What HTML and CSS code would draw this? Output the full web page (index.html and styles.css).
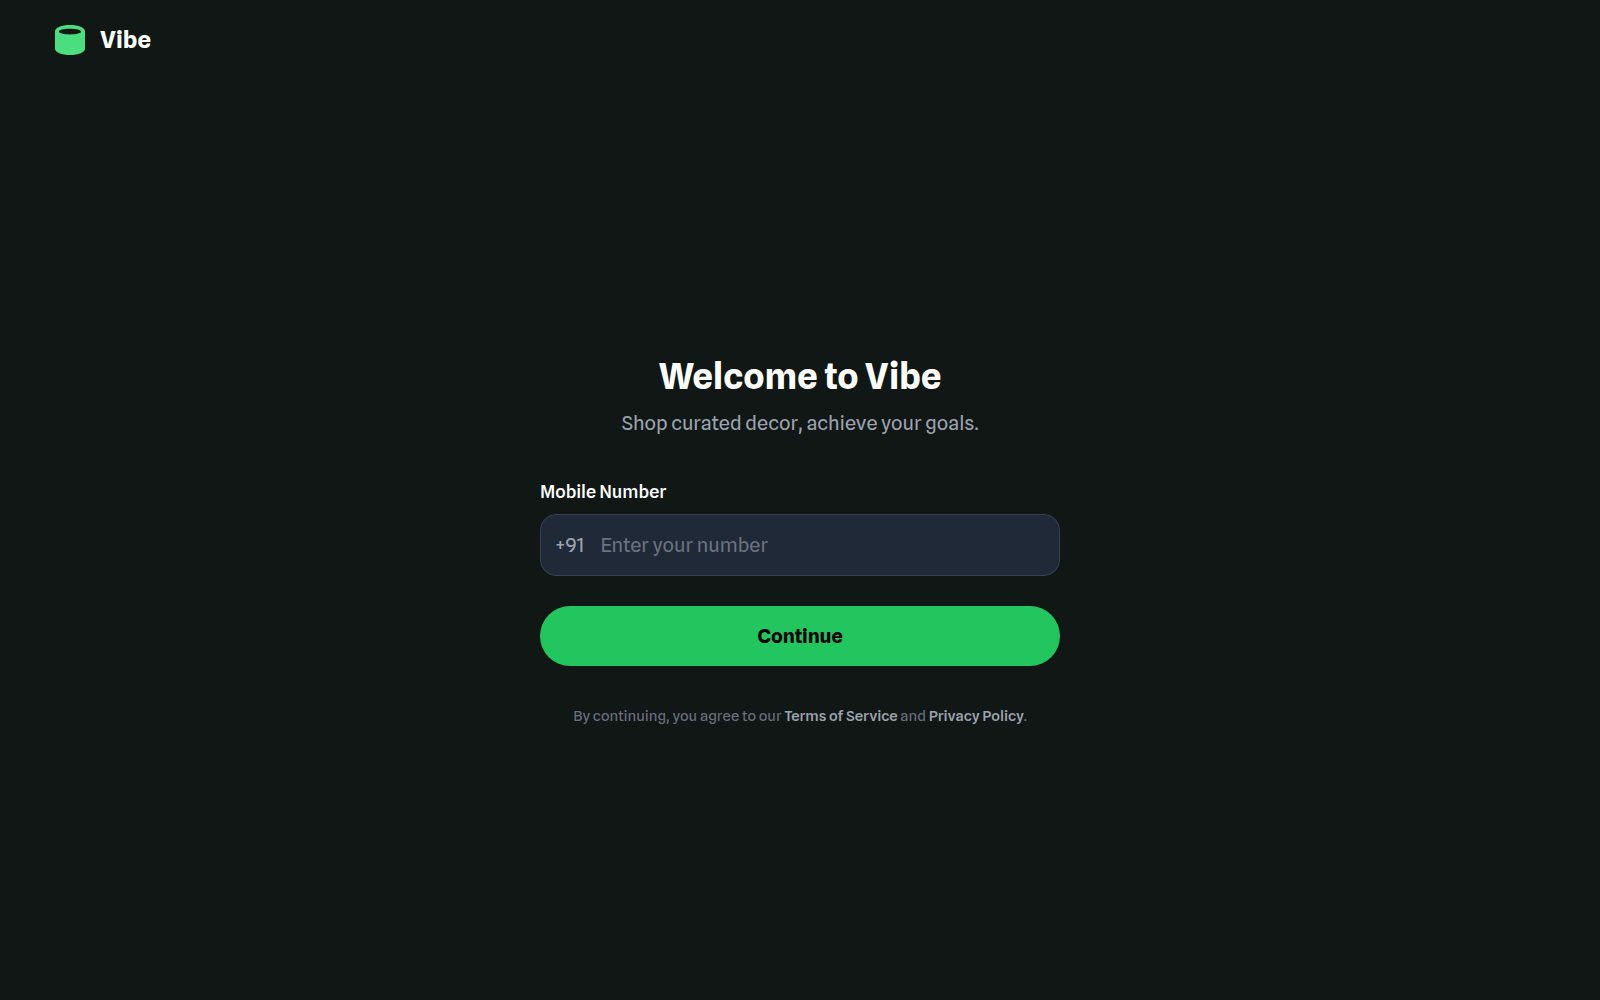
FILE: index.html
```html
<!DOCTYPE html>
<html lang="en">
<head>
<meta charset="utf-8">
<meta name="viewport" content="width=device-width, initial-scale=1">
<title>Vibe</title>
<link rel="stylesheet" href="styles.css">
</head>
<body>
<header class="header">
  <svg class="logo" viewBox="0 0 30 30" aria-hidden="true">
    <path fill="#4ade80" fill-rule="evenodd" d="M15 0C6.500 0 0 2.600 0 6.500V23.500C0 27.400 6.500 30 15 30S30 27.400 30 23.500V6.500C30 2.600 23.500 0 15 0ZM15 3.700C21.500 3.700 26.200 5 26.200 6.600S21.500 9.500 15 9.500S3.800 8.200 3.800 6.600S8.500 3.700 15 3.700Z"/>
  </svg>
  <span class="brand">Vibe</span>
</header>
<main class="main">
  <div class="card">
    <h1 class="title">Welcome to Vibe</h1>
    <p class="subtitle">Shop curated decor, achieve your goals.</p>
    <form class="form">
      <label class="label" for="mobile">Mobile Number</label>
      <div class="field">
        <span class="prefix">+91</span>
        <input class="input" id="mobile" type="tel" placeholder="Enter your number">
      </div>
      <button class="button" type="submit">Continue</button>
    </form>
    <p class="legal">By continuing, you agree to our <a class="link" href="#">Terms of Service</a> and <a class="link" href="#">Privacy Policy</a>.</p>
  </div>
</main>
</body>
</html>
```
FILE: styles.css
```css
* {
  box-sizing: border-box;
}

body {
  display: flex;
  flex-direction: column;
  min-height: 100vh;
  margin: 0;
  background: #111715;
  color: #fff;
  font-family: "Spline Sans", Roboto, "Liberation Sans", sans-serif;
}

.header {
  display: flex;
  align-items: center;
  gap: 15px;
  padding: 20px 55px;
}

.logo {
  width: 30px;
  height: 30px;
}

.brand {
  font-size: 24px;
  line-height: 40px;
  font-weight: 700;
}

.main {
  flex: 1;
  display: flex;
  align-items: center;
  justify-content: center;
  padding: 0 20px;
}

.card {
  width: 100%;
  max-width: 520px;
}

.title {
  margin: 0;
  font-size: 36px;
  line-height: 48px;
  font-weight: 700;
  text-align: center;
}

.subtitle {
  margin: 8px 0 40px;
  font-size: 20px;
  line-height: 30px;
  color: #9ca3af;
  text-align: center;
}

.form {
  display: flex;
  flex-direction: column;
}

.label {
  margin-bottom: 8px;
  font-size: 18px;
  line-height: 28px;
  font-weight: 500;
}

.field {
  display: flex;
  align-items: center;
  height: 62px;
  margin-bottom: 30px;
  padding: 0 14px;
  gap: 16px;
  border: 1px solid #374151;
  border-radius: 16px;
  background: #1f2937;
  font-size: 20px;
}

.field:focus-within {
  border-color: #22c55e;
}

.prefix {
  color: #9ca3af;
}

.input {
  flex: 1;
  min-width: 0;
  padding: 0;
  border: 0;
  outline: 0;
  background: transparent;
  color: #fff;
  font: inherit;
}

.input::placeholder {
  color: #6b7280;
}

.button {
  height: 60px;
  border: 0;
  border-radius: 30px;
  background: #22c55e;
  color: #000;
  font-family: inherit;
  font-size: 20px;
  font-weight: 700;
  cursor: pointer;
}

.legal {
  margin: 38px 0 0;
  font-size: 15px;
  line-height: 24px;
  color: #6b7280;
  text-align: center;
}

.link {
  color: #9ca3af;
  font-weight: 500;
  text-decoration: none;
}
```
